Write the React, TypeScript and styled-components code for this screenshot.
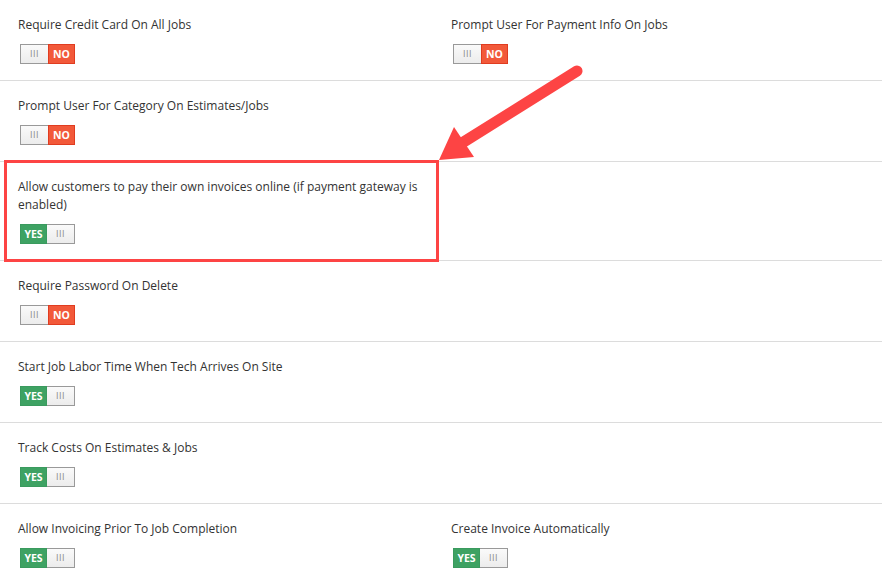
import React from 'react';
import styled, {createGlobalStyle} from 'styled-components';

const GlobalStyle = createGlobalStyle`
  html, body {
    margin: 0;
    padding: 0;
    background: #fff;
  }
  body {
    font-family: "Open Sans", "Liberation Sans", sans-serif;
    font-size: 12px;
    color: #333;
  }
`;

const Page = styled('div')`
  position: relative;
  width: 882px;
  height: 584px;
  overflow: hidden;
`;

const Row = styled('div')`
  display: grid;
  grid-template-columns: 433px 1fr;
  border-bottom: 1px solid #dcdcdc;
  &:last-child {
    border-bottom: none;
  }
`;

const Cell = styled('div')<{ $highlight?: boolean }>`
  position: relative;
  padding: 16px 0 16px 18px;
  &::after {
    content: '';
    display: ${p => (p.$highlight ? 'block' : 'none')};
    position: absolute;
    top: -2px;
    bottom: -2px;
    left: 4px;
    width: 435px;
    box-sizing: border-box;
    border: 3px solid #fd4444;
    pointer-events: none;
  }
`;

const Label = styled('div')`
  line-height: 18px;
  margin-bottom: 10px;
`;

const Switch = styled('div')`
  display: flex;
  width: fit-content;
  margin-left: 2px;
  height: 20px;
  box-sizing: border-box;
  font-size: 10.5px;
  font-weight: 700;
  line-height: 18px;
  user-select: none;
`;

const SwitchLabel = styled('span')<{ $on: boolean }>`
  width: 27px;
  box-sizing: border-box;
  text-align: center;
  color: #fff;
  background: ${p => (p.$on ? '#3ea263' : '#f2593a')};
  border: 1px solid ${p => (p.$on ? '#3a9a5e' : '#e03c20')};
`;

const Handle = styled('span')<{ $side: 'left' | 'right' }>`
  width: 28px;
  box-sizing: border-box;
  text-align: center;
  color: #888;
  font-weight: 400;
  font-size: 9px;
  letter-spacing: 0.5px;
  background: linear-gradient(#fafafa, #ececec);
  border: 1px solid #999;
  ${p => (p.$side === 'left' ? 'border-right: none;' : 'border-left: none;')}
`;

const Arrow = styled('svg')`
  position: absolute;
  top: 0;
  left: 0;
  pointer-events: none;
`;

interface Setting {
  label: string
  on: boolean
}

const Toggle = ({on}: { on: boolean }) => (
  <Switch>
    {on ? (
      <>
        <SwitchLabel $on>YES</SwitchLabel>
        <Handle $side="right">III</Handle>
      </>
    ) : (
      <>
        <Handle $side="left">III</Handle>
        <SwitchLabel $on={false}>NO</SwitchLabel>
      </>
    )}
  </Switch>
);

const rows: Setting[][] = [
  [{label: 'Require Credit Card On All Jobs', on: false}, {label: 'Prompt User For Payment Info On Jobs', on: false}],
  [{label: 'Prompt User For Category On Estimates/Jobs', on: false}],
  [{label: 'Allow customers to pay their own invoices online (if payment gateway is enabled)', on: true}],
  [{label: 'Require Password On Delete', on: false}],
  [{label: 'Start Job Labor Time When Tech Arrives On Site', on: true}],
  [{label: 'Track Costs On Estimates & Jobs', on: true}],
  [{label: 'Allow Invoicing Prior To Job Completion', on: true}, {label: 'Create Invoice Automatically', on: true}],
];

const App = () => {
  return (
    <Page>
      <GlobalStyle/>
      {rows.map((row, i) => (
        <Row key={i}>
          {row.map((s, j) => (
            <Cell key={j} $highlight={i === 2 && j === 0}>
              <Label>{s.label}</Label>
              <Toggle on={s.on}/>
            </Cell>
          ))}
        </Row>
      ))}
      <Arrow width="882" height="584" viewBox="0 0 882 584">
        <line x1="577" y1="71" x2="462" y2="143" stroke="#fd4444" strokeWidth="11" strokeLinecap="round"/>
        <polygon points="439,160 454,127 474,157" fill="#fd4444"/>
      </Arrow>
    </Page>
  );
};

export default App;
